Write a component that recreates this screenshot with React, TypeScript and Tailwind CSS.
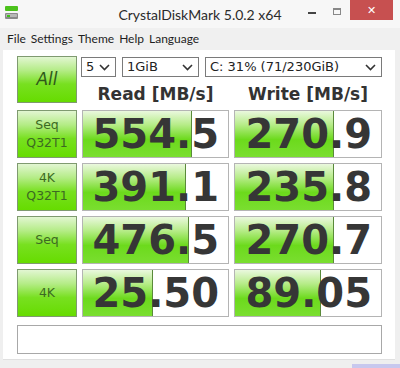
import React from 'react';

const rows = [
  { top: 'Seq', bottom: 'Q32T1', read: '554.5', readBar: 109, write: '270.9', writeBar: 99 },
  { top: '4K', bottom: 'Q32T1', read: '391.1', readBar: 103, write: '235.8', writeBar: 99 },
  { top: 'Seq', bottom: '', read: '476.5', readBar: 106, write: '270.7', writeBar: 99 },
  { top: '4K', bottom: '', read: '25.50', readBar: 70, write: '89.05', writeBar: 86 },
];

const greenBtn =
  'bg-[linear-gradient(to_bottom,#e2f6d2_0%,#b4ec86_30%,#78e020_60%,#66dc00_100%)] border border-[#7f9a70]';

function Chevron() {
  return (
    <svg width="11" height="7" viewBox="0 0 11 7" className="shrink-0">
      <path d="M1 1l4.5 4.5L10 1" fill="none" stroke="#333" strokeWidth="1.6" />
    </svg>
  );
}

function Select({ value, width }: { value: string; width: string }) {
  return (
    <div className={`${width} h-[20px] border border-[#7a7a7a] bg-white flex items-center justify-between pl-[4px] pr-[5px] text-[13px] text-[#222]`}>
      <span>{value}</span>
      <Chevron />
    </div>
  );
}

function Cell({ value, bar }: { value: string; bar: number }) {
  return (
    <div className="relative h-[48px] border border-[#b4b4b4] bg-white overflow-hidden">
      <div
        className="absolute left-0 top-0 bottom-0 bg-[linear-gradient(to_bottom,#eaf8de_0%,#b6ec88_30%,#6cda1c_62%,#7ade30_100%)] border-r border-[#5a8a3a]"
        style={{ width: bar }}
      />
      <div className="relative h-full flex items-center justify-end pr-[9px] text-[40px] font-bold leading-none text-[#363636]">
        {value}
      </div>
    </div>
  );
}

export default function App() {
  return (
    <div className="relative w-[400px] h-[368px] overflow-hidden bg-[#efefef] font-['DejaVu_Sans',sans-serif]">
      {/* title bar */}
      <div className="relative h-[28px] bg-[#f7f7f7] flex items-center">
        <svg width="16" height="16" viewBox="0 0 16 16" className="ml-[4px] mt-[-2px]">
          <rect x="1" y="1" width="13" height="5" rx="1" fill="#4cc21c" />
          <rect x="1" y="8" width="13" height="6" rx="1" fill="#8a8a8a" />
          <rect x="2" y="9" width="11" height="3" rx="1" fill="#b8b8b8" />
          <rect x="3" y="10" width="3" height="2" fill="#3fbf1a" />
        </svg>
        <div className="absolute left-0 right-0 top-[4px] text-center text-[14px] text-[#2b2b2b] font-['Lato',sans-serif]">
          CrystalDiskMark 5.0.2 x64
        </div>
        <div className="absolute left-[308px] top-[12px] w-[8px] h-[2px] bg-[#444]" />
        <div className="absolute left-[333px] top-[8px] w-[8px] h-[7px] border border-[#888] border-t-2" />
        <div className="absolute left-[350px] top-0 w-[43px] h-[20px] bg-[#c75050] flex items-center justify-center text-white text-[11px] font-['Noto_Sans',sans-serif]">
          ✕
        </div>
      </div>

      {/* menu */}
      <div className="h-[22px] bg-[#f0f0f0] flex items-center pl-[7px] gap-[5px] text-[12px] text-[#1e1e1e] font-['Lato',sans-serif]">
        <span>File</span>
        <span>Settings</span>
        <span>Theme</span>
        <span>Help</span>
        <span>Language</span>
      </div>

      {/* body */}
      <div className="ml-[3px] w-[392px] h-[310px] bg-white border-b border-[#e0e0e0] pl-[14px] pt-[6px]">
        <div className="flex gap-[4px]">
          <div className={`w-[60px] h-[47px] ${greenBtn} flex items-center justify-center text-[17px] italic text-[#2f5a1a]`}>
            All
          </div>
          <div className="w-[301px]">
            <div className="flex gap-[6px] mt-[1px]">
              <Select value="5" width="w-[35px]" />
              <Select value="1GiB" width="w-[77px]" />
              <Select value="C: 31% (71/230GiB)" width="w-[177px]" />
            </div>
            <div className="flex gap-[5px] mt-[6px] pl-[1px] text-[17px] leading-[22px] font-bold text-[#333]">
              <div className="w-[147px] text-center">Read [MB/s]</div>
              <div className="w-[148px] text-center">Write [MB/s]</div>
            </div>
          </div>
        </div>

        <div className="flex flex-col gap-[5px] mt-[5px]">
          {rows.map((r, i) => (
            <div key={i} className="flex">
              <div className={`w-[60px] h-[48px] ${greenBtn} flex flex-col items-center justify-center text-[12.5px] leading-[18px] text-[#3c6a22]`}>
                <span>{r.top}</span>
                {r.bottom && <span>{r.bottom}</span>}
              </div>
              <div className="w-[147px] ml-[5px]">
                <Cell value={r.read} bar={r.readBar} />
              </div>
              <div className="w-[148px] ml-[5px]">
                <Cell value={r.write} bar={r.writeBar} />
              </div>
            </div>
          ))}
        </div>

        <div className="mt-[8px] w-[365px] h-[29px] border border-[#a8a8a8] bg-white" />
      </div>

      <div className="absolute right-0 bottom-0 w-[48px] h-[4px] bg-[#c8c8ee]" />
    </div>
  );
}
